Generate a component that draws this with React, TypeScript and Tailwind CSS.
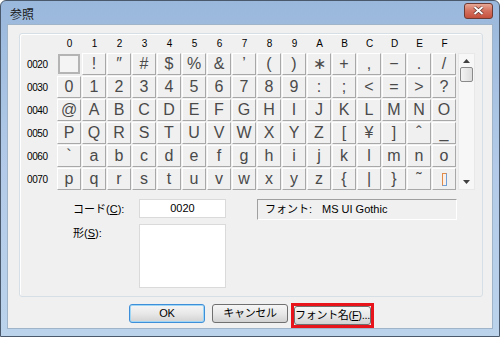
import type { ReactNode } from 'react';

const rows: { label: string; chars: string[] }[] = [
  { label: '0020', chars: [' ', '!', '″', '#', '$', '%', '&', '’', '(', ')', '∗', '+', ',', '−', '.', '/'] },
  { label: '0030', chars: ['0', '1', '2', '3', '4', '5', '6', '7', '8', '9', ':', ';', '<', '=', '>', '?'] },
  { label: '0040', chars: ['@', 'A', 'B', 'C', 'D', 'E', 'F', 'G', 'H', 'I', 'J', 'K', 'L', 'M', 'N', 'O'] },
  { label: '0050', chars: ['P', 'Q', 'R', 'S', 'T', 'U', 'V', 'W', 'X', 'Y', 'Z', '[', '¥', ']', 'ˆ', '_'] },
  { label: '0060', chars: ['`', 'a', 'b', 'c', 'd', 'e', 'f', 'g', 'h', 'i', 'j', 'k', 'l', 'm', 'n', 'o'] },
  { label: '0070', chars: ['p', 'q', 'r', 's', 't', 'u', 'v', 'w', 'x', 'y', 'z', '{', '|', '}', '˜', 'DEL'] },
];

const heads = ['0', '1', '2', '3', '4', '5', '6', '7', '8', '9', 'A', 'B', 'C', 'D', 'E', 'F'];

const ui = { fontFamily: '"Liberation Sans", "Noto Sans CJK JP", sans-serif' };

function Cell({ ch, selected }: { ch: string; selected: boolean }) {
  if (selected) {
    return (
      <div className="h-[22px] w-[24px] p-[1px]">
        <div className="h-full w-[22px] border-2 border-[#b4b4b4] bg-[#f4f4f4]" />
      </div>
    );
  }
  return (
    <div className="h-[22px] w-[24px] border border-t-white border-l-white border-r-[#a8a8a8] border-b-[#a8a8a8] bg-[#f0f0f0] flex items-center justify-center text-[16px] leading-none text-[#4a4a4a]">
      {ch === 'DEL' ? (
        <span className="block h-[13px] w-[5px] border border-l-[#e08a4a] border-t-[#e08a4a] border-r-[#6f9fd6] border-b-[#6f9fd6] bg-[#fbeee4]" />
      ) : (
        ch
      )}
    </div>
  );
}

function Button({ children, focused }: { children: ReactNode; focused?: boolean }) {
  return (
    <div
      className={
        'h-[19px] rounded-[3px] border flex items-center justify-center whitespace-nowrap text-[11px] tracking-[-0.3px] text-black bg-gradient-to-b from-[#f6f6f6] via-[#e8e8e8] to-[#d2d2d2] ' +
        (focused ? 'border-[#3c8fd8] shadow-[inset_0_0_0_1px_#9fd5f5]' : 'border-[#707070]')
      }
    >
      {children}
    </div>
  );
}

export default function App() {
  return (
    <div className="w-[500px] h-[337px] bg-white" style={ui}>
      <div className="h-full w-full flex flex-col rounded-t-[6px] border border-[#4a5a6c] bg-gradient-to-b from-[#9ab8dc] via-[#b3cbe8] to-[#bcd3ec] px-[6px] pb-[7px]">
        {/* title bar */}
        <div className="h-[26px] flex items-center justify-between pl-[3px]">
          <span className="text-[12px] text-[#1a1a1a] pt-[2px]" style={{ fontFamily: '"Noto Sans CJK JP", sans-serif' }}>
            参照
          </span>
          <div className="mt-[-4px] h-[16px] w-[29px] rounded-[3px] border border-[#6e3a34] bg-gradient-to-b from-[#e7a796] via-[#d36f5d] to-[#c4503c] flex items-center justify-center">
            <svg width="11" height="9" viewBox="0 0 11 9">
              <path d="M1.5 1 L9.5 8 M9.5 1 L1.5 8" stroke="#5a2a24" strokeWidth="3.2" />
              <path d="M1.5 1 L9.5 8 M9.5 1 L1.5 8" stroke="#ffffff" strokeWidth="2" />
            </svg>
          </div>
        </div>

        {/* body */}
        <div className="flex-1 bg-[#f0f0f0] border border-[#9fb3c9] flex flex-col pl-[11px] pr-[9px] pt-[8px]">
          <div className="h-[264px] rounded-[3px] border border-[#d5dfe5] shadow-[inset_1px_1px_0_#ffffff] pl-[7px] pt-[3px]">
            {/* column heads */}
            <div className="flex pl-[30px] h-[14px] items-center">
              {heads.map((h) => (
                <div key={h} className="w-[25px] text-center text-[10px] leading-none text-black">
                  {h}
                </div>
              ))}
            </div>
            <div className="flex mt-[2px]">
              <div className="w-[30px] flex flex-col gap-[1px]">
                {rows.map((r) => (
                  <div key={r.label} className="h-[22px] flex items-center text-[10px] tracking-[-0.4px] text-black">
                    {r.label}
                  </div>
                ))}
              </div>
              <div className="grid grid-cols-[repeat(16,24px)] gap-[1px]">
                {rows.map((r, ri) =>
                  r.chars.map((c, ci) => <Cell key={r.label + ci} ch={c} selected={ri === 0 && ci === 0} />)
                )}
              </div>
              {/* scrollbar */}
              <div className="ml-[2px] w-[17px] h-[137px] border border-[#e8e8e8] bg-[#f7f7f7] flex flex-col items-center">
                <svg width="7" height="4" viewBox="0 0 7 4" className="mt-[5px]">
                  <path d="M0 4 L3.5 0 L7 4 Z" fill="#404040" />
                </svg>
                <div className="mt-[4px] h-[15px] w-[13px] rounded-[2px] border border-[#8a8a8a] bg-gradient-to-r from-[#f4f4f4] to-[#dcdcdc]" />
                <div className="flex-1" />
                <svg width="7" height="4" viewBox="0 0 7 4" className="mb-[5px]">
                  <path d="M0 0 L7 0 L3.5 4 Z" fill="#404040" />
                </svg>
              </div>
            </div>

            {/* code / shape / font */}
            <div className="flex mt-[9px] pl-[46px]">
              <div className="grid grid-cols-[66px_87px] gap-y-[6px] text-[11px] text-black">
                <div className="pt-[2px]">
                  コード(<span className="underline">C</span>):
                </div>
                <div className="h-[19px] border border-[#dadada] bg-white flex items-center justify-center text-[11px]">
                  0020
                </div>
                <div className="pt-[1px]">
                  形(<span className="underline">S</span>):
                </div>
                <div className="h-[64px] border border-[#dadada] bg-white" />
              </div>
              <div className="ml-[31px] h-[21px] w-[200px] border border-t-[#a0a0a0] border-l-[#a0a0a0] border-r-white border-b-white flex items-center text-[11px] text-black pl-[7px]">
                <span className="w-[57px]">フォント:</span>
                <span>MS UI Gothic</span>
              </div>
            </div>
          </div>

          {/* buttons */}
          <div className="flex mt-[6px] pl-[110px]">
            <div className="w-[76px] mt-[1px]">
              <Button focused>OK</Button>
            </div>
            <div className="w-[76px] ml-[7px] mt-[1px]">
              <Button>キャンセル</Button>
            </div>
            <div className="ml-[3px] border-[3px] border-[#e8141c]">
              <div className="w-[77px]">
                <Button>
                  フォント名(<span className="underline">F</span>)...
                </Button>
              </div>
            </div>
          </div>
        </div>
      </div>
    </div>
  );
}
